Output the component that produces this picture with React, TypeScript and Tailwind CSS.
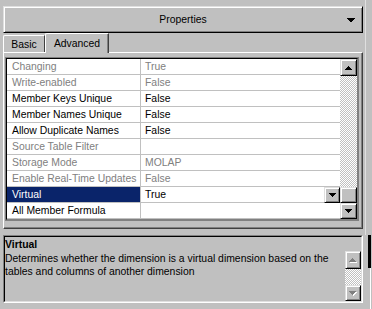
import React from "react";

const rows = [
  { name: "Changing", value: "True", dim: true },
  { name: "Write-enabled", value: "False", dim: true },
  { name: "Member Keys Unique", value: "False" },
  { name: "Member Names Unique", value: "False" },
  { name: "Allow Duplicate Names", value: "False" },
  { name: "Source Table Filter", value: "", dim: true },
  { name: "Storage Mode", value: "MOLAP", dim: true },
  { name: "Enable Real-Time Updates", value: "False", dim: true },
  { name: "Virtual", value: "True", selected: true },
  { name: "All Member Formula", value: "" },
];

const raised =
  "bg-[#c0c0c0] border border-t-[#dfdfdf] border-l-[#dfdfdf] border-r-black border-b-black shadow-[inset_1px_1px_#fff,inset_-1px_-1px_#808080]";

const dither =
  "bg-[repeating-conic-gradient(#c0c0c0_0_25%,#ffffff_0_50%)] bg-size-[2px_2px]";

function Down({ color = "#000" }: { color?: string }) {
  return (
    <svg width="7" height="4" shapeRendering="crispEdges">
      <path d="M0 0h7v1H0zM1 1h5v1H1zM2 2h3v1H2zM3 3h1v1H3z" fill={color} />
    </svg>
  );
}

function Up({ color = "#000" }: { color?: string }) {
  return (
    <svg width="7" height="4" shapeRendering="crispEdges">
      <path d="M3 0h1v1H3zM2 1h3v1H2zM1 2h5v1H1zM0 3h7v1H0z" fill={color} />
    </svg>
  );
}

function GreyArrow({ up }: { up?: boolean }) {
  return (
    <div className="relative w-[8px] h-[5px]">
      <div className="absolute left-[1px] top-[1px]">{up ? <Up color="#fff" /> : <Down color="#fff" />}</div>
      <div className="absolute left-0 top-0">{up ? <Up color="#808080" /> : <Down color="#808080" />}</div>
    </div>
  );
}

export default function App() {
  return (
    <div className="w-[372px] h-[309px] overflow-hidden bg-[#c0c0c0] flex font-['Liberation_Sans',Arial,sans-serif] text-[10.4px] text-black">
      <div className="w-[363px] pl-[3px] pt-[6px] flex flex-col shrink-0">
        {/* header */}
        <div className={`${raised} w-[360px] h-[27px] relative flex items-center justify-center`}>
          <span>Properties</span>
          <div className="absolute right-[7px] top-[11px]">
            <svg width="8" height="4" shapeRendering="crispEdges">
              <path d="M0 0h8v1H0zM1 1h6v1H1zM2 2h4v1H2zM3 3h2v1H3z" fill="#000" />
            </svg>
          </div>
        </div>

        {/* tabs */}
        <div className="h-[19px] flex items-end">
          <div className="w-[42px] h-[17px] border-t border-l border-white border-r border-r-[#404040] rounded-tl-[2px] flex items-center justify-center pt-[1px]">
            Basic
          </div>
          <div className="w-[64px] h-[20px] -mb-[1px] relative z-10 bg-[#c0c0c0] border-t border-l border-white border-r border-r-[#404040] shadow-[inset_-1px_0_#808080] rounded-tl-[2px] flex items-start justify-center pt-[2px]">
            Advanced
          </div>
        </div>

        {/* tab page */}
        <div className="w-[360px] h-[177px] border border-t-white border-l-white border-r-[#404040] border-b-[#404040] shadow-[inset_-1px_-1px_#808080] pl-[1px] pt-[4px]">
          <div className="w-[354px] h-[164px] border border-[#808080]">
            <div className="h-full border border-t-black border-l-black border-r-[#808080] border-b-[#808080] flex">
              <div className="w-[333px] bg-white flex flex-col">
                {rows.map((r) => (
                  <div key={r.name} className="h-[16px] flex border-b border-[#c0c0c0]">
                    <div
                      className={`w-[134px] border-r border-[#c0c0c0] pl-[5px] leading-[15px] whitespace-nowrap overflow-hidden ${
                        r.selected ? "bg-[#0a246a] text-white" : r.dim ? "text-[#808080]" : ""
                      }`}
                    >
                      {r.name}
                    </div>
                    <div className={`flex-1 flex pl-[4px] leading-[15px] ${r.dim ? "text-[#808080]" : ""}`}>
                      <span className="flex-1">{r.value}</span>
                      {r.selected && (
                        <div className={`${raised} w-[16px] h-[16px] flex items-center justify-center`}>
                          <Down />
                        </div>
                      )}
                    </div>
                  </div>
                ))}
              </div>
              <div className="w-[17px] flex flex-col">
                <div className={`${raised} h-[17px] flex items-center justify-center`}>
                  <Up />
                </div>
                <div className={`flex-1 ${dither}`} />
                <div className={`${raised} h-[16px]`} />
                <div className={`${raised} h-[16px] flex items-center justify-center`}>
                  <Down />
                </div>
              </div>
            </div>
          </div>
        </div>

        {/* description */}
        <div className="w-[360px] h-[68px] mt-[6px] border border-t-[#808080] border-l-[#808080] border-r-white border-b-white">
          <div className="h-full border border-t-black border-l-black border-r-[#dfdfdf] border-b-[#dfdfdf] flex flex-col">
            <div className="h-[14px] leading-[13px] pt-[1px] font-bold">Virtual</div>
            <div className="flex-1 flex">
              <div className="flex-1 leading-[13px] pt-[1px]">
                Determines whether the dimension is a virtual dimension based on the tables and columns of another
                dimension
              </div>
              <div className="w-[16px] flex flex-col">
                <div className={`${raised} h-[18px] flex items-center justify-center`}>
                  <GreyArrow up />
                </div>
                <div className={`flex-1 ${dither}`} />
                <div className={`${raised} h-[16px] flex items-center justify-center`}>
                  <GreyArrow />
                </div>
              </div>
            </div>
          </div>
        </div>
      </div>

      {/* edge of the neighbouring window */}
      <div className="flex-1 flex flex-col">
        <div className="h-[235px] flex">
          <div className="w-[2px]" />
          <div className="w-[1px] bg-[#dfdfdf]" />
        </div>
        <div className="h-[33px] flex">
          <div className="w-[5px]" />
          <div className="w-[3px] bg-black" />
        </div>
        <div className="flex-1 flex">
          <div className="w-[7px]" />
          <div className="w-[1px] bg-white" />
        </div>
      </div>
    </div>
  );
}
